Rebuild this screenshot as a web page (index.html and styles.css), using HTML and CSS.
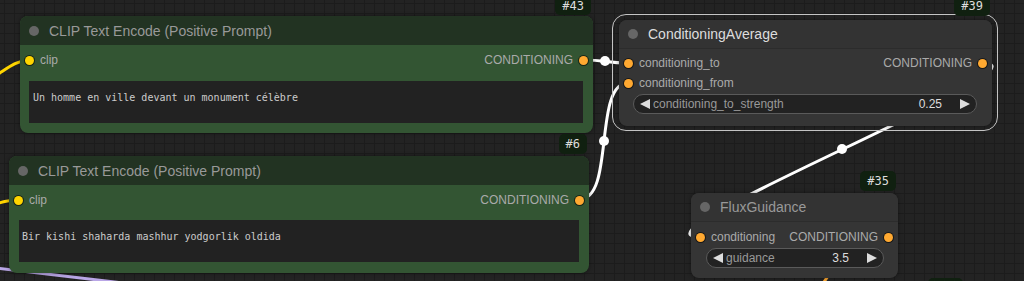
FILE: index.html
```html
<!DOCTYPE html>
<html lang="en">
<head>
    <meta charset="UTF-8">
    <meta name="viewport" content="width=device-width, initial-scale=1.0">
    <title>ComfyUI - Conditioning Average</title>
    <link rel="stylesheet" href="styles.css">
</head>
<body>
    <div class="canvas">
        <!-- links are drawn under the nodes -->
        <svg class="links" width="1024" height="281" viewBox="0 0 1024 281">
            <path d="M -10 79 C 6 70, 14 61, 29 60" stroke="#ffd500" />
            <path d="M -10 206 C 2 202, 8 200, 18 200" stroke="#ffd500" />
            <path d="M -4 268 L 140 285" stroke="#b9a6e6" />
            <path d="M 889 237 C 915 237, 830 250, 820 292" stroke="#ffa931" />
            <path d="M 584 60 C 606 60, 606 63, 628 63" stroke="#fff" />
            <path d="M 580 199 C 615 199, 593 83, 628 83" stroke="#fff" />
            <path d="M 982 63 C 1064 63, 618 237, 700 237" stroke="#fff" />
            <circle cx="605" cy="61" r="5" fill="#fff" />
            <circle cx="604" cy="141" r="5" fill="#fff" />
            <circle cx="842" cy="149" r="5" fill="#fff" />
        </svg>

        <div class="node node-green n43">
            <div class="badge">#43</div>
            <div class="node-title">
                <span class="title-dot"></span>
                <span class="title-text">CLIP Text Encode (Positive Prompt)</span>
            </div>
            <div class="node-body">
                <div class="slot-row">
                    <div class="slot"><span class="dot yellow"></span>clip</div>
                    <div class="slot">CONDITIONING<span class="dot orange"></span></div>
                </div>
                <div class="prompt">Un homme en ville devant un monument célèbre</div>
            </div>
        </div>

        <div class="node node-green n6">
            <div class="badge">#6</div>
            <div class="node-title">
                <span class="title-dot"></span>
                <span class="title-text">CLIP Text Encode (Positive Prompt)</span>
            </div>
            <div class="node-body">
                <div class="slot-row">
                    <div class="slot"><span class="dot yellow"></span>clip</div>
                    <div class="slot">CONDITIONING<span class="dot orange"></span></div>
                </div>
                <div class="prompt">Bir kishi shaharda mashhur yodgorlik oldida</div>
            </div>
        </div>

        <div class="node node-gray selected n39">
            <div class="badge">#39</div>
            <div class="node-title">
                <span class="title-dot"></span>
                <span class="title-text">ConditioningAverage</span>
            </div>
            <div class="node-body">
                <div class="slot-row">
                    <div class="slot"><span class="dot orange"></span>conditioning_to</div>
                    <div class="slot">CONDITIONING<span class="dot orange"></span></div>
                </div>
                <div class="slot-row">
                    <div class="slot"><span class="dot orange"></span>conditioning_from</div>
                </div>
                <div class="widget">
                    <span class="arrow left"></span>
                    <span class="w-label">conditioning_to_strength</span>
                    <span class="w-value">0.25</span>
                    <span class="arrow right"></span>
                </div>
            </div>
        </div>

        <div class="node node-gray n35">
            <div class="badge">#35</div>
            <div class="node-title">
                <span class="title-dot"></span>
                <span class="title-text">FluxGuidance</span>
            </div>
            <div class="node-body">
                <div class="slot-row">
                    <div class="slot"><span class="dot orange"></span>conditioning</div>
                    <div class="slot">CONDITIONING<span class="dot orange"></span></div>
                </div>
                <div class="widget">
                    <span class="arrow left"></span>
                    <span class="w-label">guidance</span>
                    <span class="w-value">3.5</span>
                    <span class="arrow right"></span>
                </div>
            </div>
        </div>

        <div class="badge stray"></div>
    </div>
</body>
</html>
```

FILE: styles.css
```css
* {
    margin: 0;
    padding: 0;
    box-sizing: border-box;
}

body {
    background: #222;
    font-family: "Liberation Sans", Arial, sans-serif;
    overflow: hidden;
}

.canvas {
    position: relative;
    width: 1024px;
    height: 281px;
    overflow: hidden;
    background-color: #232323;
    background-image:
        linear-gradient(to right, #1c1c1c 1px, transparent 1px),
        linear-gradient(to bottom, #1c1c1c 1px, transparent 1px);
    background-size: 10px 10px;
    background-position: 4px 3px;
}

.links {
    position: absolute;
    left: 0;
    top: 0;
}

.links path {
    fill: none;
    stroke-width: 3;
    stroke-linecap: round;
}

/* nodes sit on the free canvas at their graph positions */
.node {
    position: absolute;
    display: flex;
    flex-direction: column;
    border-radius: 8px;
    box-shadow: 0 0 4px rgba(0, 0, 0, 0.45);
}

.n43 { left: 20px; top: 16px; width: 573px; height: 117px; }
.n6  { left: 9px; top: 156px; width: 580px; height: 117px; }
.n39 { left: 619px; top: 20px; width: 373px; height: 106px; }
.n35 { left: 691px; top: 193px; width: 207px; height: 85px; }

.node-green { background: #335533; }
.node-gray { background: #353535; }

.selected::before {
    content: "";
    position: absolute;
    left: -7px;
    top: -6px;
    right: -6px;
    bottom: -5px;
    border: 1.5px solid #c4c4c4;
    border-radius: 14px;
    pointer-events: none;
}

.node-title {
    height: 29px;
    display: flex;
    align-items: center;
    gap: 10px;
    padding-left: 9px;
    border-radius: 8px 8px 0 0;
    flex-shrink: 0;
}

.node-green .node-title { background: #223322; }
.node-gray .node-title {
    background: #333;
    border-bottom: 1px solid #2c2c2c;
}

.title-dot {
    width: 10px;
    height: 10px;
    border-radius: 50%;
    background: #666;
}

.title-text {
    font-size: 14px;
    color: #999;
}

.selected .title-text { color: #ddd; }

.node-body {
    flex: 1;
    display: flex;
    flex-direction: column;
    padding: 5px 0 0;
}

.n39 .node-body { padding-top: 4px; }

.slot-row {
    height: 20px;
    display: flex;
    justify-content: space-between;
    align-items: center;
    padding: 0 5px;
}

.slot {
    display: flex;
    align-items: center;
    gap: 6px;
    font-size: 12px;
    color: #aaa;
}

.dot {
    width: 9px;
    height: 9px;
    border-radius: 50%;
    box-shadow: 0 0 0 1px rgba(0, 0, 0, 0.55);
}

.dot.yellow { background: #ffd500; }
.dot.orange { background: #ffa931; }

.prompt {
    margin: 11px 10px 0 9px;
    height: 42px;
    background: #222;
    padding: 10px 4px 0;
    font-family: "DejaVu Sans Mono", monospace;
    font-size: 10px;
    line-height: 13px;
    color: #ccc;
}

.n6 .prompt { margin: 10px 10px 0 10px; padding-left: 3px; }

.widget {
    height: 20px;
    margin: 1px 15px 0 14px;
    display: flex;
    align-items: center;
    padding: 0 6px 0 6px;
    background: #222;
    border: 1px solid #5a5a5a;
    border-radius: 10px;
    font-size: 12px;
}

.n35 .widget { margin: 1px 14px 0 15px; }

.w-label {
    margin-left: 3px;
    color: #999;
}

.w-value {
    margin-left: auto;
    color: #ddd;
}

.arrow {
    width: 0;
    height: 0;
    border-top: 5px solid transparent;
    border-bottom: 5px solid transparent;
}

.arrow.left { border-right: 10px solid #ddd; }
.arrow.right {
    border-left: 10px solid #ddd;
    margin-left: 18px;
}

.badge {
    position: absolute;
    right: 2px;
    bottom: calc(100% + 2px);
    height: 20px;
    padding: 0 7px;
    border-radius: 5px;
    background: #102010;
    color: #ddd;
    font-family: "DejaVu Sans Mono", monospace;
    font-size: 12px;
    line-height: 20px;
}

.n43 .badge {
    bottom: calc(100% + 1px);
    line-height: 22px;
}

.n39 .badge { bottom: calc(100% + 4px); }

.badge.stray {
    left: 928px;
    top: 278px;
    width: 35px;
    bottom: auto;
    right: auto;
}
```
